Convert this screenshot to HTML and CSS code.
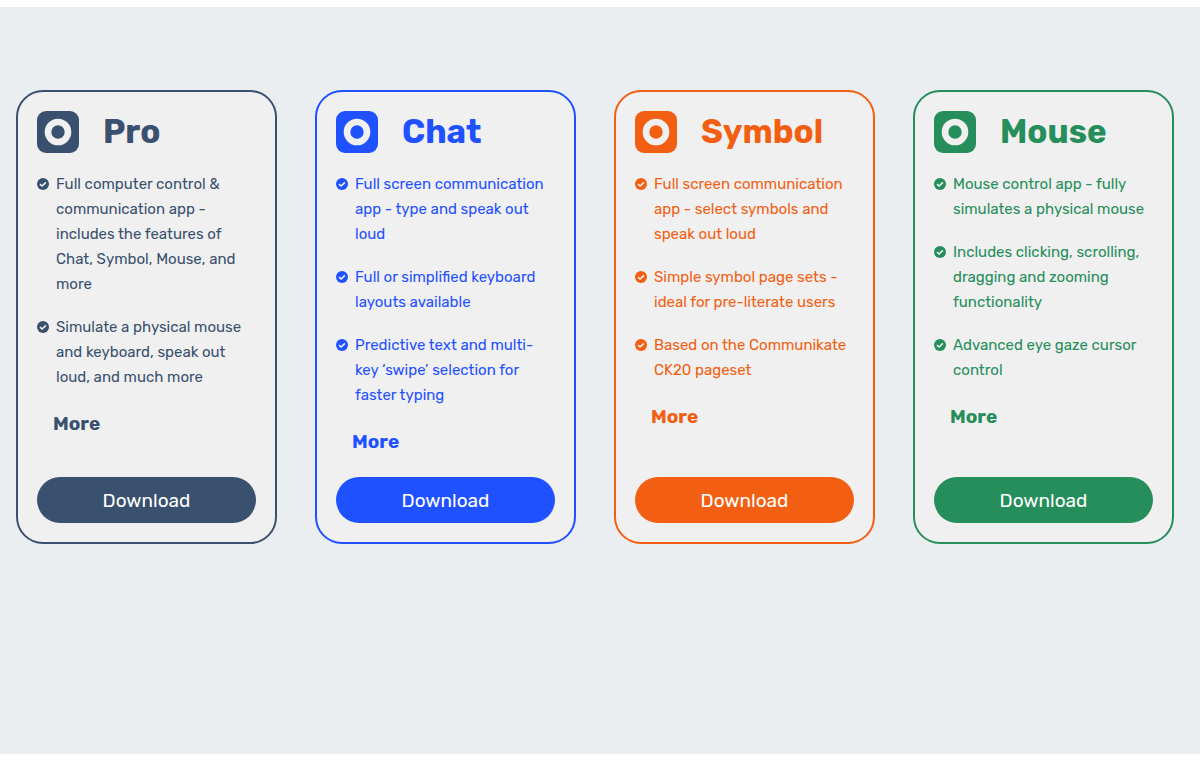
FILE: index.html
```html
<!DOCTYPE html>
<html lang="en">
<head>
<meta charset="utf-8">
<meta name="viewport" content="width=device-width, initial-scale=1">
<title>Downloads</title>
<link rel="stylesheet" href="styles.css">
</head>
<body>
<svg class="sprite" aria-hidden="true">
  <symbol id="logo" viewBox="0 0 42 42">
    <rect width="42" height="42" rx="9" fill="currentColor"/>
    <circle cx="21" cy="21" r="10" fill="none" stroke="#f0f0f0" stroke-width="6.6"/>
  </symbol>
  <symbol id="check" viewBox="0 0 12 12">
    <circle cx="6" cy="6" r="6" fill="currentColor"/>
    <path d="M3 6.2 5.1 8 8.9 4.4" fill="none" stroke="#f0f0f0" stroke-width="1.6"/>
  </symbol>
</svg>
<main class="plans">
  <article class="card pro">
    <header class="card-head"><svg class="logo"><use href="#logo"/></svg><h2>Pro</h2></header>
    <ul class="features">
      <li><svg class="check"><use href="#check"/></svg><span>Full computer control &amp; communication app - includes the features of Chat, Symbol, Mouse, and more</span></li>
      <li><svg class="check"><use href="#check"/></svg><span>Simulate a physical mouse and keyboard, speak out loud, and much more</span></li>
    </ul>
    <a class="more" href="#">More</a>
    <button class="download" type="button">Download</button>
  </article>
  <article class="card chat">
    <header class="card-head"><svg class="logo"><use href="#logo"/></svg><h2>Chat</h2></header>
    <ul class="features">
      <li><svg class="check"><use href="#check"/></svg><span>Full screen communication app - type and speak out loud</span></li>
      <li><svg class="check"><use href="#check"/></svg><span>Full or simplified keyboard layouts available</span></li>
      <li><svg class="check"><use href="#check"/></svg><span>Predictive text and multi-key ‘swipe’ selection for faster typing</span></li>
    </ul>
    <a class="more" href="#">More</a>
    <button class="download" type="button">Download</button>
  </article>
  <article class="card symbol">
    <header class="card-head"><svg class="logo"><use href="#logo"/></svg><h2>Symbol</h2></header>
    <ul class="features">
      <li><svg class="check"><use href="#check"/></svg><span>Full screen communication app - select symbols and speak out loud</span></li>
      <li><svg class="check"><use href="#check"/></svg><span>Simple symbol page sets - ideal for pre-literate users</span></li>
      <li><svg class="check"><use href="#check"/></svg><span>Based on the Communikate CK20 pageset</span></li>
    </ul>
    <a class="more" href="#">More</a>
    <button class="download" type="button">Download</button>
  </article>
  <article class="card mouse">
    <header class="card-head"><svg class="logo"><use href="#logo"/></svg><h2>Mouse</h2></header>
    <ul class="features">
      <li><svg class="check"><use href="#check"/></svg><span>Mouse control app - fully simulates a physical mouse</span></li>
      <li><svg class="check"><use href="#check"/></svg><span>Includes clicking, scrolling, dragging and zooming functionality</span></li>
      <li><svg class="check"><use href="#check"/></svg><span>Advanced eye gaze cursor control</span></li>
    </ul>
    <a class="more" href="#">More</a>
    <button class="download" type="button">Download</button>
  </article>
</main>
</body>
</html>
```
FILE: styles.css
```css
* { box-sizing: border-box; }
body {
  margin: 0;
  padding: 7px 0 6px;
  min-height: 100vh;
  display: flex;
  flex-direction: column;
  background: #fff;
  font-family: Rubik, Roboto, sans-serif;
  font-size: 15px;
  line-height: 25px;
}
.sprite { display: none; }
.plans {
  flex: 1;
  display: grid;
  grid-template-columns: repeat(4, minmax(0, 1fr));
  align-items: stretch;
  align-content: start;
  gap: 38px;
  padding: 83px 26px 38px 16px;
  background: #eaeef1;
}
.card {
  display: flex;
  flex-direction: column;
  padding: 19px;
  border: 2px solid;
  border-radius: 27px;
  background: #f0f0f0;
  color: var(--tone);
}
.pro { --tone: #3a506f; }
.chat { --tone: #1f51ff; }
.symbol { --tone: #f35f12; }
.mouse { --tone: #268e5b; }
.card-head {
  display: flex;
  align-items: center;
  gap: 24px;
}
.logo { width: 42px; height: 42px; }
h2 {
  margin: 0;
  font-size: 33px;
  line-height: 42px;
  font-weight: 700;
}
.features {
  display: grid;
  gap: 18px;
  margin: 19px 0 0;
  padding: 0;
  list-style: none;
}
.features li { display: flex; gap: 7px; }
.check {
  flex: none;
  width: 12px;
  height: 12px;
  margin-top: 6px;
}
.more {
  align-self: flex-start;
  margin: 22px 0 23px 16px;
  color: inherit;
  font-size: 19px;
  line-height: 24px;
  font-weight: 700;
  text-decoration: none;
}
.download {
  margin-top: auto;
  height: 46px;
  border: 0;
  border-radius: 23px;
  background: var(--tone);
  color: #fff;
  font-family: inherit;
  font-size: 19px;
  cursor: pointer;
}
@media (max-width: 900px) {
  .plans { grid-template-columns: repeat(2, minmax(0, 1fr)); }
}
```
